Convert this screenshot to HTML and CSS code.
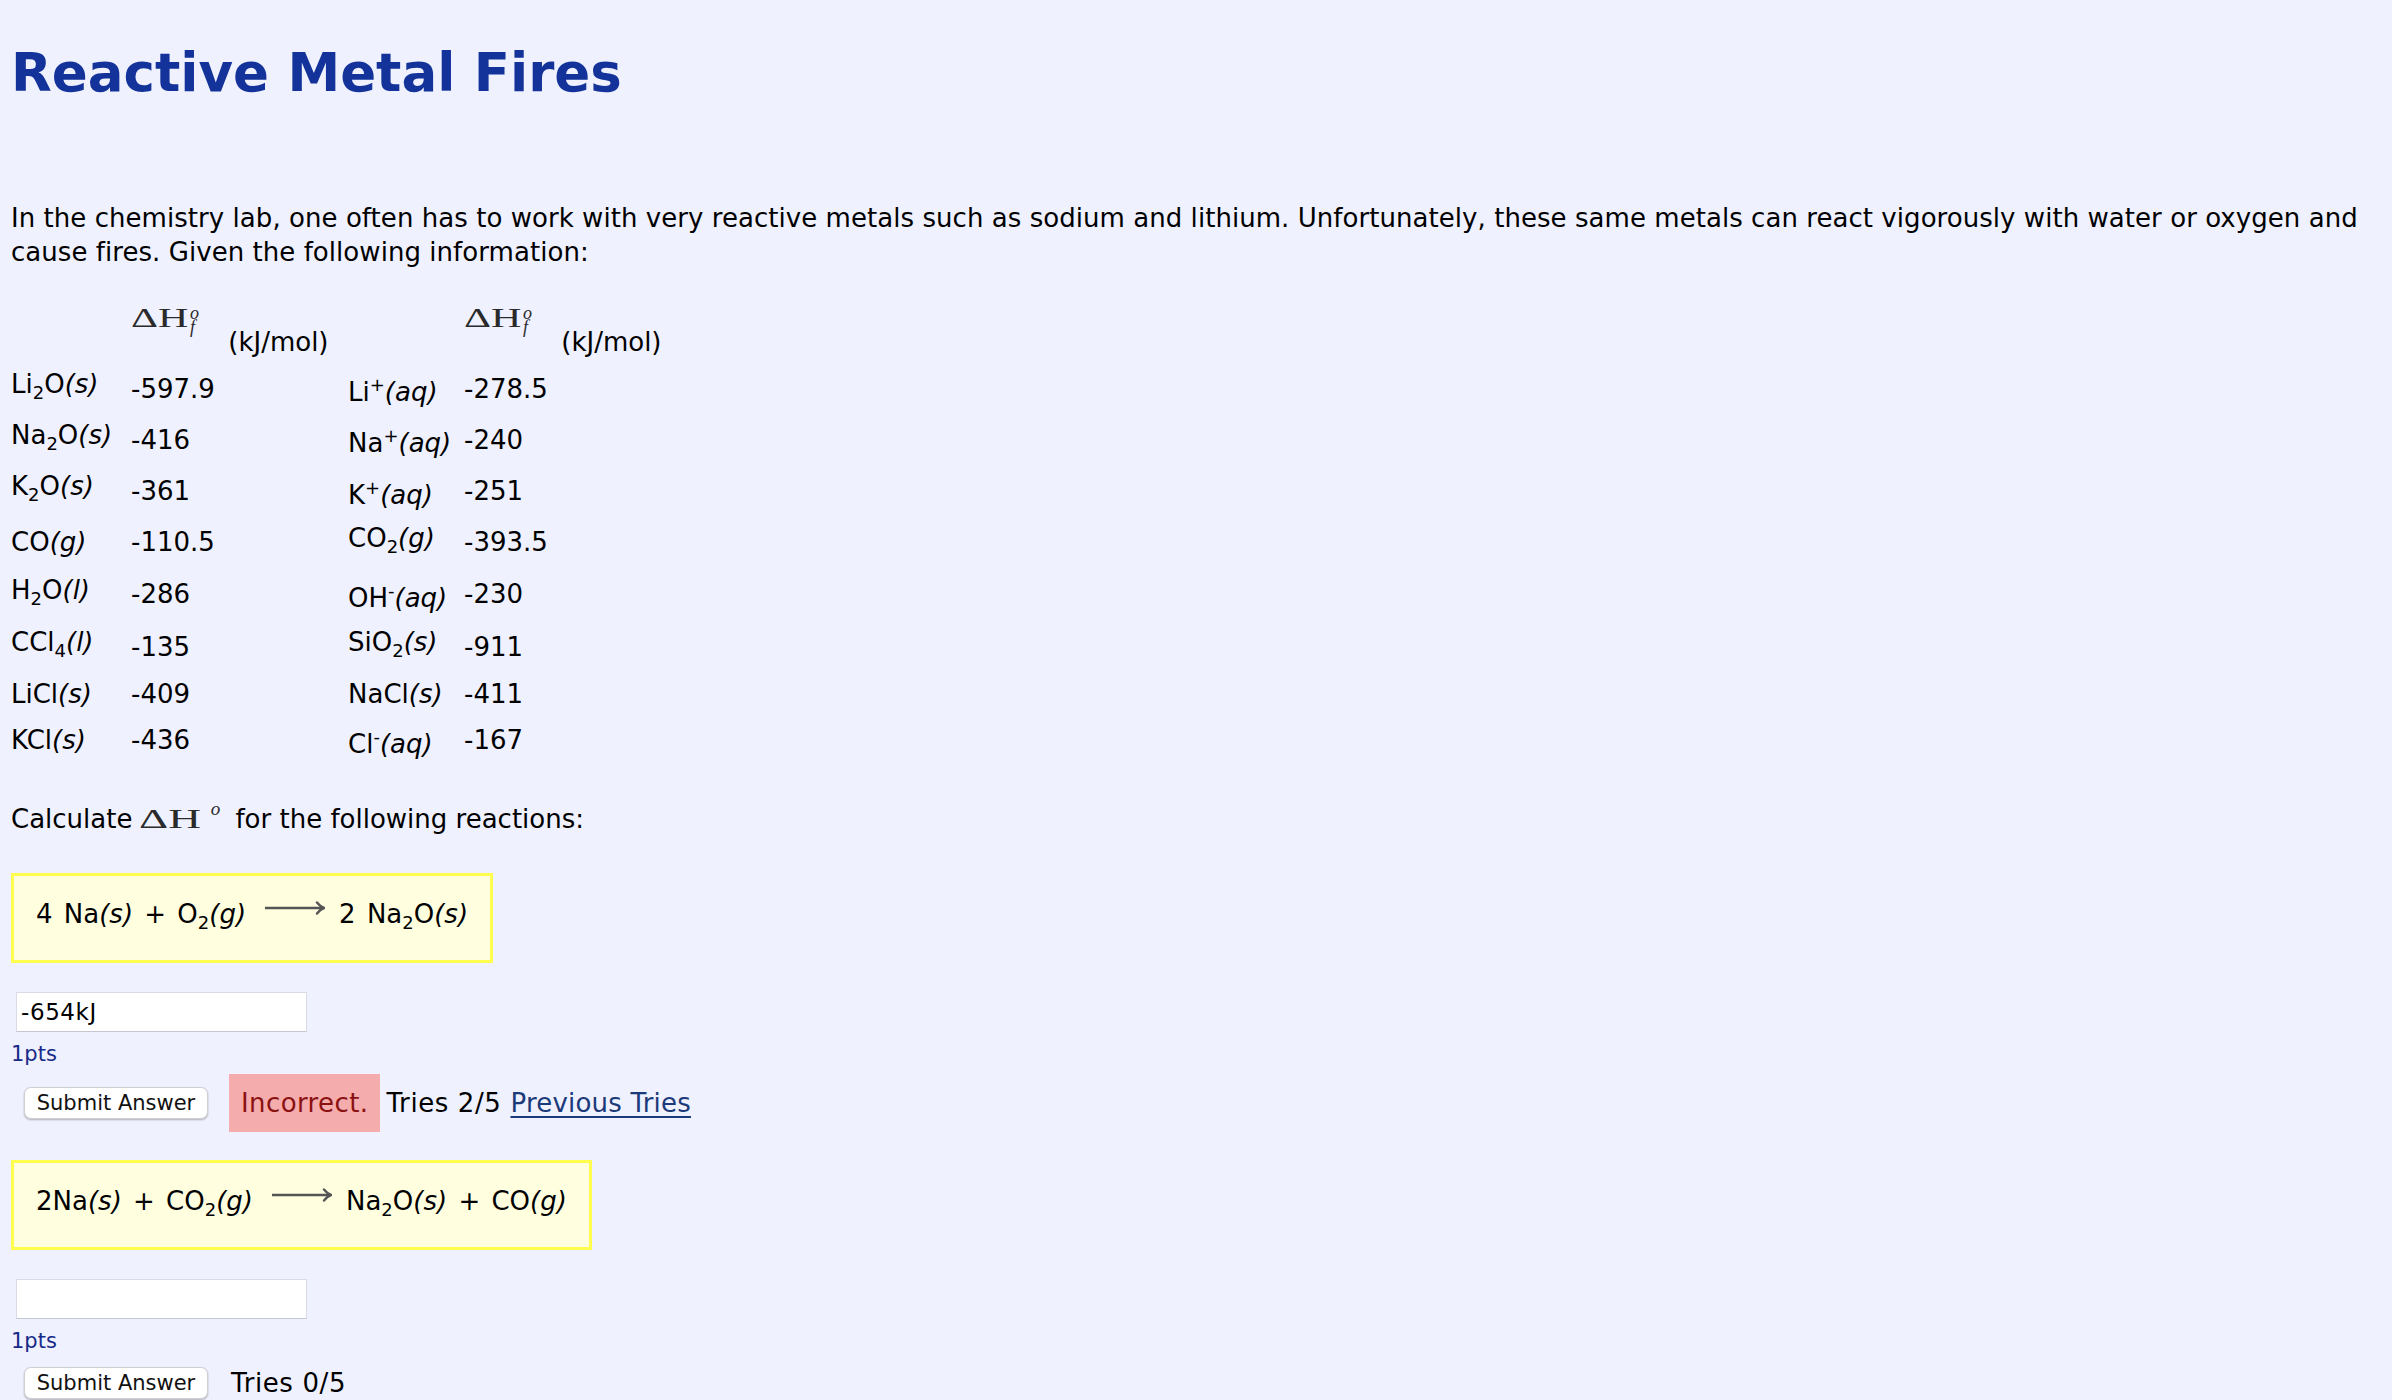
FILE: index.html
```html
<!DOCTYPE html>
<html lang="en">
<head>
<meta charset="utf-8">
<title>Reactive Metal Fires</title>
<link rel="stylesheet" href="styles.css">
</head>
<body>
<h1 class="title">Reactive Metal Fires</h1>
<p class="intro">In the chemistry lab, one often has to work with very reactive metals such as sodium and lithium. Unfortunately, these same metals can react vigorously with water or oxygen and cause fires. Given the following information:</p>
<table class="data">
  <tr class="head">
    <td class="c1"></td>
    <td class="c2"><span class="dh">ΔH</span><span class="ss"><i>o</i><i>f</i></span> (kJ/mol)</td>
    <td class="c3"></td>
    <td class="c4"><span class="dh">ΔH</span><span class="ss"><i>o</i><i>f</i></span> (kJ/mol)</td>
  </tr>
  <tr><td>Li<sub>2</sub>O<i>(s)</i></td><td>-597.9</td><td>Li<sup>+</sup><i>(aq)</i></td><td>-278.5</td></tr>
  <tr><td>Na<sub>2</sub>O<i>(s)</i></td><td>-416</td><td>Na<sup>+</sup><i>(aq)</i></td><td>-240</td></tr>
  <tr><td>K<sub>2</sub>O<i>(s)</i></td><td>-361</td><td>K<sup>+</sup><i>(aq)</i></td><td>-251</td></tr>
  <tr><td>CO<i>(g)</i></td><td>-110.5</td><td>CO<sub>2</sub><i>(g)</i></td><td>-393.5</td></tr>
  <tr><td>H<sub>2</sub>O<i>(l)</i></td><td>-286</td><td>OH<sup>-</sup><i>(aq)</i></td><td>-230</td></tr>
  <tr><td>CCl<sub>4</sub><i>(l)</i></td><td>-135</td><td>SiO<sub>2</sub><i>(s)</i></td><td>-911</td></tr>
  <tr><td>LiCl<i>(s)</i></td><td>-409</td><td>NaCl<i>(s)</i></td><td>-411</td></tr>
  <tr><td>KCl<i>(s)</i></td><td>-436</td><td>Cl<sup>-</sup><i>(aq)</i></td><td>-167</td></tr>
</table>
<p class="calc">Calculate <span class="dh2">ΔH</span><span class="deg"><i>o</i></span> for the following reactions:</p>

<div class="rxn">4 Na<i>(s)</i> + O<sub>2</sub><i>(g)</i><svg class="arrow" width="60" height="14" viewBox="0 0 60 14"><path d="M0 7 H58" /><path d="M52 1.5 C54 4 56 6 59 7 C56 8 54 10 52 12.5" /></svg>2 Na<sub>2</sub>O<i>(s)</i></div>
<input class="answer" type="text" value="-654kJ">
<div class="pts">1pts</div>
<div class="row">
  <button class="submit">Submit Answer</button>
  <span class="incorrect">Incorrect.</span>
  <span class="tries">Tries 2/5</span>
  <a class="prev" href="#">Previous Tries</a>
</div>

<div class="rxn rxn2">2Na<i>(s)</i> + CO<sub>2</sub><i>(g)</i><svg class="arrow" width="60" height="14" viewBox="0 0 60 14"><path d="M0 7 H58" /><path d="M52 1.5 C54 4 56 6 59 7 C56 8 54 10 52 12.5" /></svg>Na<sub>2</sub>O<i>(s)</i> + CO<i>(g)</i></div>
<input class="answer" type="text" value="">
<div class="pts">1pts</div>
<div class="row">
  <button class="submit">Submit Answer</button>
  <span class="tries0">Tries 0/5</span>
</div>
</body>
</html>
```
FILE: styles.css
```css
html {
  overflow: hidden;
  background: #eff1fe;
}
body {
  margin: 0;
  padding: 0 11px;
  background: #eff1fe;
  color: #000;
  font-family: "DejaVu Sans", Verdana, sans-serif;
  font-size: 26px;
  line-height: 34px;
}
.title {
  margin: 42px 0 0;
  font-size: 53px;
  line-height: 62px;
  font-weight: bold;
  color: #14339a;
}
.intro {
  margin: 97px 0 0;
  letter-spacing: 0.05px;
}
.data {
  border-collapse: collapse;
  margin-top: 16px;
}
.data td {
  padding: 4px 0;
  white-space: nowrap;
}
.data tr:nth-child(n+5) td {
  padding-bottom: 5px;
}
.data .c1 { width: 120px; }
.data .c2 { width: 217px; }
.data .c3 { width: 116px; }
.data tr.head {
  height: 78px;
}
.data tr.head td {
  vertical-align: bottom;
  padding: 0 0 4px;
}
sub, sup {
  font-size: 18px;
}
i {
  font-style: italic;
}
.dh {
  display: inline-block;
  vertical-align: 24px;
  font-family: "Liberation Serif", "Times New Roman", serif;
  font-size: 28px;
  line-height: 28px;
  width: 38px;
  margin-right: 21px;
  transform: scaleX(1.5);
  transform-origin: 0 0;
  color: #2a2a2a;
}
.ss {
  display: inline-flex;
  flex-direction: column;
  vertical-align: 32px;
  font-family: "Liberation Serif", "Times New Roman", serif;
  font-size: 18px;
  line-height: 14px;
  margin-right: 21px;
  color: #2a2a2a;
}
.ss i {
  display: block;
}
.calc {
  margin: 35px 0 0;
}
.dh2 {
  display: inline-block;
  font-family: "Liberation Serif", "Times New Roman", serif;
  font-size: 27px;
  line-height: 27px;
  width: 38px;
  margin-left: -2px;
  margin-right: 34px;
  transform: scaleX(1.68);
  transform-origin: 0 0;
  color: #2a2a2a;
}
.deg {
  display: inline-block;
  vertical-align: 13px;
  font-family: "Liberation Serif", "Times New Roman", serif;
  font-size: 19px;
  line-height: 16px;
  margin-right: 7px;
  color: #2a2a2a;
}
.rxn {
  width: fit-content;
  margin-top: 37px;
  border: 3px solid #ffff4d;
  background: #ffffe0;
  padding: 21px 22px 20px;
  font-size: 26px;
  line-height: 34px;
  word-spacing: 3px;
  white-space: nowrap;
}
.rxn2 {
  margin-top: 28px;
}
.arrow {
  vertical-align: 8px;
  margin: 0 14px 0 19px;
  fill: none;
  stroke: #555;
  stroke-width: 2.4;
  stroke-linecap: round;
}
.answer {
  display: block;
  box-sizing: border-box;
  width: 291px;
  height: 40px;
  margin: 29px 0 0 5px;
  padding: 0 4px;
  border: 1px solid #d9dbe6;
  border-bottom-color: #c4c6d0;
  background: #fff;
  font-family: "DejaVu Sans", Verdana, sans-serif;
  font-size: 23px;
  letter-spacing: 0.6px;
  color: #000;
  outline: none;
}
.pts {
  margin-top: 9px;
  font-size: 21px;
  line-height: 26px;
  color: #172a88;
}
.row {
  display: flex;
  align-items: center;
  margin-top: 7px;
  white-space: nowrap;
}
.submit {
  box-sizing: border-box;
  width: 184px;
  height: 32px;
  margin: 6px 21px 6px 13px;
  padding: 0;
  background: #fff;
  border: 1px solid #cfcfd4;
  border-radius: 7px;
  box-shadow: 0 1px 2px rgba(0, 0, 0, 0.28);
  font-family: "DejaVu Sans", Verdana, sans-serif;
  font-size: 21px;
  color: #111;
}
.incorrect {
  display: flex;
  align-items: center;
  height: 58px;
  padding: 0 12px;
  background: #f4acac;
  color: #8b1111;
  letter-spacing: 0.4px;
}
.tries {
  margin-left: 6px;
  letter-spacing: 0.6px;
}
.prev {
  margin-left: 9px;
  color: #1c3a7a;
  letter-spacing: 0.2px;
  text-decoration: underline;
  text-underline-offset: 4px;
  text-decoration-thickness: 2px;
}
.tries0 {
  margin-left: 2px;
  letter-spacing: 0.6px;
}
```
